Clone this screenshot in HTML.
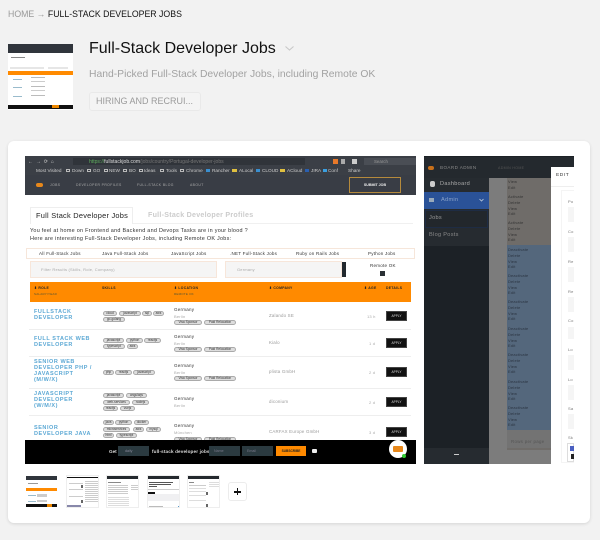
<!DOCTYPE html>
<html><head><meta charset="utf-8"><style>
html,body{margin:0;padding:0;width:600px;height:540px;overflow:hidden;background:#f2f2f2;font-family:"Liberation Sans",sans-serif}
.a,.a *{position:absolute;white-space:nowrap}
.a{left:0;top:0}
.s{left:0;top:0;width:600px;height:540px;filter:blur(.35px)}
div,span{box-sizing:border-box}
.i,.i *{position:static}
.t{color:#333;font-size:4.5px;letter-spacing:.25px}
.g{color:#777;font-size:4px;letter-spacing:.2px}
.l{color:#4a9fd0;font-size:5.5px;letter-spacing:.55px;line-height:5.9px;font-weight:bold;opacity:.9}
.k{height:4.5px;background:#ddd;border:.5px solid #aaa;border-radius:3px;font-size:3.2px;line-height:3.6px;color:#333;text-align:center}
.ap{left:386px;width:21px;height:10px;background:#111;border:1px solid #444;color:#ddd;font-size:3.2px;line-height:8px;text-align:center}
.h{left:29px;width:382px;height:1px;background:#eee}
.w{color:#fff;font-size:3.4px;font-weight:bold;letter-spacing:.3px}
.r{color:#666;font-size:3.6px;letter-spacing:.2px}
.b{color:#ccc;font-size:4.7px;line-height:6px;top:168px}
.f{top:169px;width:4px;height:3px;border:.5px solid #bbb}
.th{top:475px;width:33px;height:33px;background:#fff;border:1px solid #eee;overflow:hidden}
</style></head><body>
<div class="a">
<div class="i" style="position:absolute;left:8px;top:7px;font-size:8.75px;line-height:14px;color:#999">HOME → <span style="color:#111">FULL-STACK DEVELOPER JOBS</span></div>
<div style="left:89px;top:38px;font-size:16px;line-height:22px;color:#111">Full-Stack Developer Jobs</div>
<svg style="left:284px;top:45px" width="12" height="7"><path d="M1.5 1.5L5.5 5L9.5 1.5" fill="none" stroke="#c8c8c8" stroke-width="1.1"/></svg>
<div style="left:89px;top:67px;font-size:10.35px;line-height:15px;color:#a2a2a2">Hand-Picked Full-Stack Developer Jobs, including Remote OK</div>
<div style="left:89px;top:92px;width:112px;height:19px;border:1px solid #e9e9e9;border-radius:3px;font-size:9px;line-height:17px;color:#9a9a9a;padding-left:6px;background:#f4f4f4">HIRING AND RECRUI...</div>
<div style="left:8px;top:141px;width:582px;height:382px;background:#fff;border-radius:6px;box-shadow:0 1px 3px rgba(0,0,0,.12)"></div>

<div class="s">
<div style="left:8px;top:44px;width:65px;height:66px;background:#fff;overflow:hidden">
 <div style="left:0;top:0;width:65px;height:9px;background:#30353c"></div>
 <div style="left:0;top:27px;width:65px;height:4px;background:#ff8a00"></div>
 <div style="left:3px;top:13px;width:14px;height:1px;background:#888"></div>
 <div style="left:2px;top:23px;width:34px;height:2px;background:#e6e6e6"></div>
 <div style="left:40px;top:23px;width:20px;height:2px;background:#e6e6e6"></div>
 <div style="left:5px;top:35px;width:9px;height:1px;background:#9bc"></div><div style="left:23px;top:33px;width:14px;height:1px;background:#bbb"></div><div style="left:23px;top:37px;width:14px;height:1px;background:#ccc"></div>
 <div style="left:5px;top:43px;width:9px;height:1px;background:#9bc"></div><div style="left:23px;top:42px;width:14px;height:1px;background:#bbb"></div><div style="left:23px;top:46px;width:14px;height:1px;background:#ccc"></div>
 <div style="left:5px;top:52px;width:9px;height:1px;background:#9bc"></div><div style="left:23px;top:51px;width:14px;height:1px;background:#bbb"></div>
 <div style="left:0;top:61px;width:65px;height:4px;background:#111"></div>
 <div style="left:44px;top:61px;width:7px;height:3px;background:#e80"></div>
</div>

<!-- main screenshot -->
<div style="left:25px;top:156px;width:391px;height:308px;background:#fff"></div>
<div style="left:25px;top:156px;width:391px;height:19px;background:#3b3f46"></div>
<div style="left:25px;top:175px;width:391px;height:20px;background:#393d45"></div>
<div style="left:73px;top:158px;width:232px;height:7px;background:#30343a"></div>
<div style="left:364px;top:158px;width:52px;height:7px;background:#4a4e55"></div>
<div style="left:28px;top:159px;font-size:5px;line-height:6px;color:#ccc;word-spacing:1.5px">← → ⟳ ⌂</div>
<div class="i" style="position:absolute;left:89px;top:159px;font-size:5.05px;line-height:6px;color:#777"><span style="color:#5fae5f">https://</span><span style="color:#ddd">fullstackjob.com</span>/jobs/country/Portugal-developer-jobs</div>
<div style="left:374px;top:159px;font-size:4.4px;line-height:6px;color:#999">Search</div>
<div style="left:333px;top:159px;width:5px;height:5px;background:#e8792a"></div><div style="left:341px;top:159px;width:4px;height:5px;background:#aaa"></div><div style="left:352px;top:159px;width:5px;height:5px;background:#ccc"></div>
<div class="b" style="left:36px">Most Visited</div><div class="f" style="left:66px"></div>
<div class="b" style="left:72px">Down</div><div class="f" style="left:87px"></div>
<div class="b" style="left:93px">GO</div><div class="f" style="left:104px"></div>
<div class="b" style="left:109px">NEW</div><div class="f" style="left:123px"></div>
<div class="b" style="left:129px">BO</div><div class="f" style="left:139px"></div>
<div class="b" style="left:144px">Ideas</div><div class="f" style="left:160px"></div>
<div class="b" style="left:166px">Tools</div><div class="f" style="left:180px"></div>
<div class="b" style="left:186px">Chrome</div>
<div style="left:206px;top:169px;width:4px;height:3px;background:#3a8fd0"></div><div class="b" style="left:212px">Rancher</div>
<div style="left:232px;top:169px;width:5px;height:3px;background:#e0c040"></div><div class="b" style="left:239px">ALocal</div>
<div style="left:256px;top:169px;width:4px;height:3px;background:#3a8fd0"></div><div class="b" style="left:262px">CLOUD</div>
<div style="left:280px;top:169px;width:5px;height:3px;background:#e0c040"></div><div class="b" style="left:287px">ACloud</div>
<div style="left:305px;top:169px;width:4px;height:3px;background:#2a5fb0"></div><div class="b" style="left:311px">JIRA</div>
<div style="left:323px;top:169px;width:4px;height:3px;background:#3a9fe0"></div><div class="b" style="left:328px">Conf</div>
<div class="b" style="left:348px">Share</div>
<div style="left:36px;top:183px;width:7px;height:4px;background:#e8881a;border-radius:2px"></div>
<div style="left:50px;top:183px;font-size:3.4px;line-height:5px;color:#aaa;letter-spacing:.4px">JOBS</div>
<div style="left:76px;top:183px;font-size:3.4px;line-height:5px;color:#aaa;letter-spacing:.4px">DEVELOPER PROFILES</div>
<div style="left:137px;top:183px;font-size:3.4px;line-height:5px;color:#aaa;letter-spacing:.4px">FULL-STACK BLOG</div>
<div style="left:190px;top:183px;font-size:3.4px;line-height:5px;color:#aaa;letter-spacing:.4px">ABOUT</div>
<div style="left:349px;top:177px;width:52px;height:16px;border:1px solid #b58a3c;color:#eee;font-size:3.6px;line-height:14px;text-align:center;font-weight:bold">SUBMIT JOB</div>

<div style="left:30px;top:223px;width:383px;height:1px;background:#f0f0f0"></div>
<div style="left:30px;top:207px;width:103px;height:17px;background:#fff;border:1px solid #eee;border-bottom:0"></div>
<div style="left:36px;top:210px;font-size:7.4px;line-height:11px;color:#222;letter-spacing:.25px">Full Stack Developer Jobs</div>
<div style="left:148px;top:210px;font-size:7.1px;line-height:11px;color:#ccc;letter-spacing:.25px;font-weight:bold">Full-Stack Developer Profiles</div>
<div style="left:30px;top:227px;font-size:5.45px;line-height:8px;color:#333;letter-spacing:.27px">You feel at home on Frontend and Backend and Devops Tasks are in your blood ?</div>
<div style="left:30px;top:235px;font-size:5.45px;line-height:8px;color:#333;letter-spacing:.27px">Here are interesting Full-Stack Developer Jobs, including Remote OK Jobs:</div>

<div style="left:26px;top:248px;width:389px;height:11px;border:1px solid #f6e6da"></div>
<div class="t" style="left:39px;top:250px;line-height:7px">All Full-Stack Jobs</div>
<div class="t" style="left:102px;top:250px;line-height:7px">Java Full-Stack Jobs</div>
<div class="t" style="left:171px;top:250px;line-height:7px">JavaScript Jobs</div>
<div class="t" style="left:230px;top:250px;line-height:7px">.NET Full-Stack Jobs</div>
<div class="t" style="left:296px;top:250px;line-height:7px">Ruby on Rails Jobs</div>
<div class="t" style="left:368px;top:250px;line-height:7px">Python Jobs</div>

<div style="left:30px;top:261px;width:187px;height:17px;background:#f5f5f5;border:1px solid #f7e6da"></div>
<div class="g" style="left:41px;top:267px;line-height:5px;color:#aaa">Filter Results (Skills, Role, Company)</div>
<div style="left:225px;top:261px;width:117px;height:17px;background:#f5f5f5;border:1px solid #f7e6da"></div>
<div class="g" style="left:237px;top:267px;line-height:5px;color:#aaa">Germany</div>
<div style="left:342px;top:262px;width:4px;height:15px;background:#22292e"></div>
<div class="t" style="left:370px;top:262px;line-height:7px">Remote OK</div>
<div style="left:380px;top:271px;width:5px;height:5px;background:#2a3035"></div>

<div style="left:30px;top:282px;width:381px;height:20px;background:#ff8a00"></div>
<div class="w" style="left:34px;top:286px;line-height:5px;color:#222">⬍ ROLE</div>
<div class="r" style="left:34px;top:292px;line-height:5px;color:#553;font-size:3px">SALARY/YEAR</div>
<div class="w" style="left:102px;top:286px;line-height:5px;color:#222">SKILLS</div>
<div class="w" style="left:174px;top:286px;line-height:5px;color:#222">⬍ LOCATION</div>
<div class="r" style="left:174px;top:292px;line-height:5px;color:#553;font-size:3px">REMOTE OK</div>
<div class="w" style="left:269px;top:286px;line-height:5px;color:#222">⬍ COMPANY</div>
<div class="w" style="left:364px;top:286px;line-height:5px;color:#222">⬍ AGE</div>
<div class="w" style="left:386px;top:286px;line-height:5px;color:#222">DETAILS</div>

<!-- rows -->
<div class="l" style="left:34px;top:310px">FULLSTACK<br><span style="position:static">DEVELOPER</span></div>
<div class="k" style="left:103px;top:311px;width:14px">cloud</div><div class="k" style="left:119px;top:311px;width:22px">javascript</div><div class="k" style="left:142px;top:311px;width:10px">sql</div><div class="k" style="left:153px;top:311px;width:11px">aws</div><div class="k" style="left:103px;top:317px;width:22px">go-golang</div>
<div class="t" style="left:174px;top:307px;line-height:6px">Germany</div><div class="g" style="left:174px;top:314px;line-height:5px;color:#aaa">Berlin</div>
<div class="k" style="left:174px;top:320px;width:28px">Visa Sponsor</div><div class="k" style="left:204px;top:320px;width:32px">Paid Relocation</div>
<div class="r" style="left:269px;top:313px;line-height:6px;color:#999;font-size:4.4px">Zalando SE</div><div class="g" style="left:367px;top:314px;line-height:5px;color:#aaa">13 h</div>
<div class="ap" style="top:311px">APPLY</div>
<div class="h" style="top:329px"></div>

<div class="l" style="left:34px;top:337px">FULL STACK WEB<br><span style="position:static">DEVELOPER</span></div>
<div class="k" style="left:103px;top:338px;width:21px">javascript</div><div class="k" style="left:126px;top:338px;width:17px">python</div><div class="k" style="left:144px;top:338px;width:17px">reactjs</div><div class="k" style="left:103px;top:344px;width:22px">typescript</div><div class="k" style="left:127px;top:344px;width:11px">aws</div>
<div class="t" style="left:174px;top:334px;line-height:6px">Germany</div><div class="g" style="left:174px;top:341px;line-height:5px;color:#aaa">Berlin</div>
<div class="k" style="left:174px;top:347px;width:28px">Visa Sponsor</div><div class="k" style="left:204px;top:347px;width:32px">Paid Relocation</div>
<div class="r" style="left:269px;top:340px;line-height:6px;color:#999;font-size:4.4px">Kialo</div><div class="g" style="left:369px;top:341px;line-height:5px;color:#aaa">1 d</div>
<div class="ap" style="top:338px">APPLY</div>
<div class="h" style="top:356px"></div>

<div class="l" style="left:34px;top:360px">SENIOR WEB<br><span style="position:static">DEVELOPER PHP /</span><br><span style="position:static">JAVASCRIPT</span><br><span style="position:static">(M/W/X)</span></div>
<div class="k" style="left:103px;top:370px;width:11px">php</div><div class="k" style="left:115px;top:370px;width:17px">reactjs</div><div class="k" style="left:133px;top:370px;width:22px">javascript</div>
<div class="t" style="left:174px;top:363px;line-height:6px">Germany</div><div class="g" style="left:174px;top:370px;line-height:5px;color:#aaa">Berlin</div>
<div class="k" style="left:174px;top:376px;width:28px">Visa Sponsor</div><div class="k" style="left:204px;top:376px;width:32px">Paid Relocation</div>
<div class="r" style="left:269px;top:369px;line-height:6px;color:#999;font-size:4.4px">plista GmbH</div><div class="g" style="left:369px;top:370px;line-height:5px;color:#aaa">2 d</div>
<div class="ap" style="top:367px">APPLY</div>
<div class="h" style="top:388px"></div>

<div class="l" style="left:34px;top:392px">JAVASCRIPT<br><span style="position:static">DEVELOPER</span><br><span style="position:static">(W/M/X)</span></div>
<div class="k" style="left:103px;top:393px;width:21px">javascript</div><div class="k" style="left:126px;top:393px;width:21px">angularjs</div><div class="k" style="left:103px;top:400px;width:27px">web-services</div><div class="k" style="left:132px;top:400px;width:17px">nodejs</div><div class="k" style="left:103px;top:406px;width:15px">reactjs</div><div class="k" style="left:120px;top:406px;width:15px">vuejs</div>
<div class="t" style="left:174px;top:396px;line-height:6px">Germany</div><div class="g" style="left:174px;top:403px;line-height:5px;color:#aaa">Berlin</div>
<div class="r" style="left:269px;top:399px;line-height:6px;color:#999;font-size:4.4px">diconium</div><div class="g" style="left:369px;top:400px;line-height:5px;color:#aaa">2 d</div>
<div class="ap" style="top:397px">APPLY</div>
<div class="h" style="top:415px"></div>

<div class="l" style="left:34px;top:426px">SENIOR<br><span style="position:static">DEVELOPER JAVA</span></div>
<div class="k" style="left:103px;top:420px;width:11px">java</div><div class="k" style="left:115px;top:420px;width:17px">python</div><div class="k" style="left:134px;top:420px;width:15px">docker</div><div class="k" style="left:103px;top:427px;width:27px">microservices</div><div class="k" style="left:133px;top:427px;width:11px">aws</div><div class="k" style="left:146px;top:427px;width:15px">mysql</div><div class="k" style="left:103px;top:433px;width:11px">html</div><div class="k" style="left:116px;top:433px;width:21px">typescript</div>
<div class="t" style="left:174px;top:423px;line-height:6px">Germany</div><div class="g" style="left:174px;top:430px;line-height:5px;color:#aaa">München</div>
<div class="k" style="left:174px;top:437px;width:28px">Visa Sponsor</div><div class="k" style="left:204px;top:437px;width:32px">Paid Relocation</div>
<div class="r" style="left:269px;top:429px;line-height:6px;color:#999;font-size:4.4px">CARFAX Europe GmbH</div><div class="g" style="left:369px;top:430px;line-height:5px;color:#aaa">3 d</div>
<div class="ap" style="top:427px">APPLY</div>

<!-- footer -->
<div style="left:25px;top:440px;width:391px;height:24px;background:#000"></div>
<div style="left:109px;top:449px;font-size:4.6px;line-height:6px;color:#ddd;font-weight:bold">Get</div>
<div style="left:118px;top:446px;width:31px;height:10px;background:#2b3a40;color:#889;font-size:3.6px;line-height:10px;padding-left:7px">daily</div>
<div style="left:152px;top:449px;font-size:4.6px;line-height:6px;color:#ddd;font-weight:bold;letter-spacing:.15px">full-stack developer jobs</div>
<div style="left:209px;top:446px;width:31px;height:10px;background:#2b3a40;color:#778;font-size:3.6px;line-height:10px;padding-left:5px">Name</div>
<div style="left:242px;top:446px;width:31px;height:10px;background:#2b3a40;color:#778;font-size:3.6px;line-height:10px;padding-left:5px">Email</div>
<div style="left:276px;top:446px;width:30px;height:10px;background:#ff8a00;color:#222;font-size:3.2px;line-height:10px;text-align:center;font-weight:bold">SUBSCRIBE</div>
<div style="left:312px;top:449px;width:5px;height:4px;background:#eee;border-radius:1px"></div>
<div style="left:389px;top:440px;width:18px;height:18px;background:#fff;border-radius:50%"></div>
<div style="left:393px;top:446px;width:10px;height:6px;background:#e8881a;border-radius:1px"></div>
<div style="left:402px;top:454px;width:4px;height:4px;background:#3c3;border-radius:50%"></div>

<!-- second screenshot -->
<div style="left:424px;top:156px;width:150px;height:308px;background:#1c2126"></div>
<div style="left:424px;top:157px;width:150px;height:21px;background:#24292e"></div>
<div style="left:428px;top:166px;width:6px;height:4px;background:#c8701a;border-radius:2px"></div>
<div style="left:440px;top:165px;font-size:4.6px;line-height:6px;color:#888;letter-spacing:.4px">BOARD ADMIN</div>
<div style="left:498px;top:165px;font-size:3.6px;line-height:6px;color:#555;letter-spacing:.3px">ADMIN HOME</div>
<div style="left:424px;top:178px;width:65px;height:14px;background:#262b30"></div>
<div style="left:430px;top:181px;width:5px;height:6px;background:#ccc;border-radius:2px"></div>
<div style="left:440px;top:181px;font-size:5.6px;line-height:7px;color:#aaa;letter-spacing:.3px">Dashboard</div>
<div style="left:424px;top:192px;width:65px;height:17px;background:#2a5298"></div>
<div style="left:429px;top:198px;width:5px;height:4px;background:#9ab"></div>
<div style="left:441px;top:197px;font-size:5.6px;line-height:7px;color:#8aa2c8;letter-spacing:.3px">Admin</div>
<svg style="left:479px;top:198px" width="5" height="4"><path d="M.5 1L2.5 3L4.5 1" fill="none" stroke="#bcd" stroke-width=".8"/></svg>
<div style="left:424px;top:209px;width:65px;height:37px;background:#262b30"></div>
<div style="left:425px;top:210px;width:63px;height:18px;background:#22272c;border:1px solid #1e2c44"></div>
<div style="left:429px;top:215px;font-size:5.6px;line-height:7px;color:#999;letter-spacing:.3px">Jobs</div>
<div style="left:429px;top:232px;font-size:5.6px;line-height:7px;color:#888;letter-spacing:.3px">Blog Posts</div>
<div style="left:424px;top:448px;width:65px;height:16px;background:#262b30"></div>
<div style="left:454px;top:454px;width:5px;height:1px;background:#ccc"></div>
<div style="left:489px;top:178px;width:75px;height:286px;background:#7c7c7c"></div>
<div style="left:507px;top:178px;width:46px;height:272px;background:#6f6c69"></div>
<div style="left:507px;top:245px;width:46px;height:185px;background:#54677c"></div>
<div style="left:507px;top:430px;width:46px;height:18px;background:#737373"></div>
<div style="left:511px;top:439px;font-size:4.4px;line-height:6px;color:#555;letter-spacing:.3px">Rows per page</div>
<div class="r" style="left:508px;top:179px;line-height:5.8px;font-size:3.9px;color:#333;white-space:pre">View
Edit</div>
<div class="r" style="left:508px;top:194px;line-height:5.8px;font-size:3.9px;color:#333;white-space:pre">Activate
Delete
View
Edit</div>
<div class="r" style="left:508px;top:220px;line-height:5.8px;font-size:3.9px;color:#333;white-space:pre">Activate
Delete
View
Edit</div>
<div class="r" style="left:508px;top:247px;line-height:5.8px;font-size:3.9px;color:#2a3340;white-space:pre">Deactivate
Delete
View
Edit</div>
<div class="r" style="left:508px;top:273px;line-height:5.8px;font-size:3.9px;color:#2a3340;white-space:pre">Deactivate
Delete
View
Edit</div>
<div class="r" style="left:508px;top:299px;line-height:5.8px;font-size:3.9px;color:#2a3340;white-space:pre">Deactivate
Delete
View
Edit</div>
<div class="r" style="left:508px;top:326px;line-height:5.8px;font-size:3.9px;color:#2a3340;white-space:pre">Deactivate
Delete
View
Edit</div>
<div class="r" style="left:508px;top:352px;line-height:5.8px;font-size:3.9px;color:#2a3340;white-space:pre">Deactivate
Delete
View
Edit</div>
<div class="r" style="left:508px;top:379px;line-height:5.8px;font-size:3.9px;color:#2a3340;white-space:pre">Deactivate
Delete
View
Edit</div>
<div class="r" style="left:508px;top:405px;line-height:5.8px;font-size:3.9px;color:#2a3340;white-space:pre">Deactivate
Delete
View
Edit</div>
<!-- edit modal -->
<div style="left:551px;top:167px;width:23px;height:297px;background:#fff"></div>
<div style="left:556px;top:173px;font-size:4.8px;line-height:6px;color:#333;letter-spacing:.6px">EDIT</div>
<div style="left:551px;top:186px;width:23px;height:1px;background:#eee"></div>
<div style="left:561px;top:190px;width:13px;height:273px;border:1px solid #f4f4f4;border-right:0"></div>
<div class="g" style="left:568px;top:199px;line-height:5px">Po</div><div style="left:568px;top:207px;width:6px;height:15px;background:#f5f5f5"></div>
<div class="g" style="left:568px;top:229px;line-height:5px">Co</div><div style="left:568px;top:237px;width:6px;height:15px;background:#f5f5f5"></div>
<div class="g" style="left:568px;top:259px;line-height:5px">Re</div><div style="left:568px;top:267px;width:6px;height:15px;background:#f5f5f5"></div>
<div class="g" style="left:568px;top:289px;line-height:5px">Re</div><div style="left:568px;top:297px;width:6px;height:15px;background:#f5f5f5"></div>
<div class="g" style="left:568px;top:318px;line-height:5px">Co</div><div style="left:568px;top:327px;width:6px;height:12px;background:#f5f5f5"></div>
<div class="g" style="left:568px;top:347px;line-height:5px">Lo</div><div style="left:568px;top:355px;width:6px;height:15px;background:#f5f5f5"></div>
<div class="g" style="left:568px;top:377px;line-height:5px">Lo</div><div style="left:568px;top:385px;width:6px;height:15px;background:#f5f5f5"></div>
<div class="g" style="left:568px;top:406px;line-height:5px">Sa</div><div style="left:568px;top:414px;width:6px;height:15px;background:#f5f5f5"></div>
<div class="g" style="left:568px;top:435px;line-height:5px">Sk</div>
<div style="left:567px;top:443px;width:7px;height:19px;border:1px solid #ddd"></div>
<div style="left:570px;top:446px;width:4px;height:5px;background:#4a5fc0"></div>
<div style="left:571px;top:454px;width:3px;height:5px;background:#222"></div>

<!-- thumbnails -->
<div class="th" style="left:25px;border:0"><div style="left:1px;top:1px;width:31px;height:4px;background:#30353c"></div><div style="left:1px;top:13px;width:31px;height:3px;background:#ff8a00"></div><div style="left:3px;top:8px;width:10px;height:1px;background:#999"></div><div style="left:3px;top:20px;width:8px;height:1px;background:#9bc"></div><div style="left:12px;top:19px;width:10px;height:3px;background:#ccc"></div><div style="left:3px;top:26px;width:8px;height:1px;background:#9bc"></div><div style="left:12px;top:25px;width:10px;height:2px;background:#ccc"></div><div style="left:1px;top:29px;width:31px;height:3px;background:#111"></div><div style="left:22px;top:29px;width:5px;height:3px;background:#e80"></div></div>
<div class="th" style="left:66px"><div style="left:0;top:1px;width:33px;height:1px;background:#111"></div><div style="left:18px;top:5px;width:13px;height:21px;background:repeating-linear-gradient(#ccc 0 1px,#fff 1px 2px)"></div><div style="left:2px;top:7px;width:14px;height:1px;background:#ccc"></div><div style="left:2px;top:13px;width:14px;height:1px;background:#ccc"></div><div style="left:2px;top:20px;width:14px;height:1px;background:#ccc"></div><div style="left:14px;top:9px;width:2px;height:3px;background:#666"></div><div style="left:14px;top:24px;width:2px;height:3px;background:#666"></div><div style="left:0;top:29px;width:14px;height:2px;background:#88a"></div></div>
<div class="th" style="left:106px"><div style="left:0;top:0;width:33px;height:3px;background:#24292e"></div><div style="left:1px;top:6px;width:13px;height:1px;background:#888"></div><div style="left:1px;top:9px;width:20px;height:10px;background:repeating-linear-gradient(#ccc 0 1px,#fff 1px 2px)"></div><div style="left:24px;top:9px;width:8px;height:6px;background:repeating-linear-gradient(#ccc 0 1px,#fff 1px 2px)"></div><div style="left:1px;top:21px;width:21px;height:9px;background:repeating-linear-gradient(#ddd 0 1px,#fff 1px 2px)"></div></div>
<div class="th" style="left:147px"><div style="left:0;top:0;width:33px;height:3px;background:#24292e"></div><div style="left:1px;top:6px;width:24px;height:1px;background:#555"></div><div style="left:1px;top:8px;width:22px;height:1px;background:#555"></div><div style="left:1px;top:10px;width:8px;height:1px;background:#555"></div><div style="left:0;top:13px;width:33px;height:1px;background:#ccc"></div><div style="left:0;top:16px;width:7px;height:2px;background:#111"></div><div style="left:0;top:18px;width:33px;height:7px;background:#f0f0f2"></div><div style="left:1px;top:30px;width:14px;height:1px;background:#bbb"></div><div style="left:30px;top:30px;width:2px;height:2px;background:#59c"></div></div>
<div class="th" style="left:187px"><div style="left:0;top:0;width:33px;height:3px;background:#24292e"></div><div style="left:1px;top:6px;width:5px;height:1px;background:#888"></div><div style="left:1px;top:9px;width:17px;height:1px;background:#ccc"></div><div style="left:1px;top:12px;width:17px;height:1px;background:#ddd"></div><div style="left:1px;top:15px;width:17px;height:1px;background:#ddd"></div><div style="left:1px;top:19px;width:17px;height:1px;background:#ddd"></div><div style="left:1px;top:24px;width:17px;height:1px;background:#ddd"></div><div style="left:18px;top:16px;width:2px;height:3px;background:#666"></div><div style="left:18px;top:28px;width:2px;height:3px;background:#666"></div><div style="left:21px;top:6px;width:11px;height:6px;background:repeating-linear-gradient(#ddd 0 1px,#fff 1px 2px)"></div></div>
</div>
<div style="left:228px;top:482px;width:19px;height:19px;background:#fff;border:1px solid #ececec;border-radius:3px"></div>
<div style="left:234px;top:491px;width:7px;height:1.6px;background:#111"></div>
<div style="left:236.7px;top:488.3px;width:1.6px;height:7px;background:#111"></div>
</div>
</body></html>
